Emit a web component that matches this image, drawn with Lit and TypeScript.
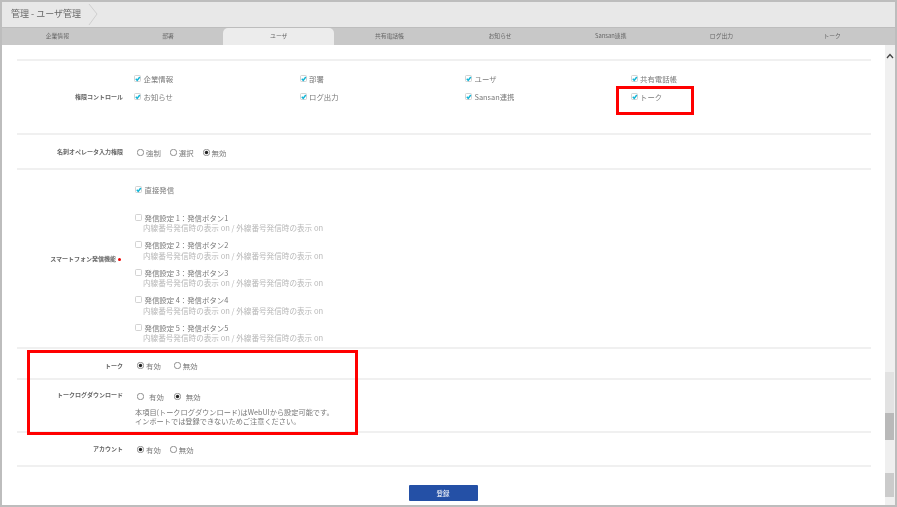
import { LitElement, html, css, svg } from "lit";
import { customElement } from "lit/decorators.js";

const tabs = ["企業情報", "部署", "ユーザ", "共有電話帳", "お知らせ", "Sansan連携", "ログ出力", "トーク"];
const perms = ["企業情報", "部署", "ユーザ", "共有電話帳", "お知らせ", "ログ出力", "Sansan連携", "トーク"];

const tick = svg`<path d="M1.8 3.8 3.2 5.4 5.8 2" fill="none" stroke="#12b5d6" stroke-width="1.5"/>`;

@customElement("app-root")
export class AppRoot extends LitElement {
  static styles = css`
    :host { display: block; width: 897px; height: 507px; }
    * { box-sizing: border-box; }
    .frame {
      position: relative; width: 897px; height: 507px; overflow: hidden; background: #fff;
      border: 2px solid #bdbdbd;
      font-family: "Noto Sans CJK JP", "Noto Sans", sans-serif; color: #7a7a7a; font-size: 7.4px;
    }
    .soft { filter: blur(0.35px); }
    .head { height: 25px; background: #e8e8e8; display: flex; align-items: center; padding: 0 0 2px 9px; }
    .title { font-size: 9px; color: #666; }
    .chev { margin-left: 7px; }
    .tabs { height: 18px; display: flex; background: #c8c8c8; border-top: 1px solid #bdbdbd; }
    .tab { flex: 0 0 110.7px; display: flex; align-items: center; justify-content: center; font-size: 5.8px; color: #666; padding-bottom: 3px; }
    .tab.on { background: #ececec; border-radius: 5px 5px 0 0; }
    .body { display: flex; height: 460px; }
    .main { width: 883px; padding: 14px 14px 0 15px; }
    .row { display: flex; border-top: 2px solid #f0f0f0; }
    .lab { width: 106px; text-align: right; font-size: 6px; font-weight: 700; color: #666; flex: none; }
    .val { padding-left: 11px; flex: 1; }
    .r-perm { height: 74px; align-items: flex-start; }
    .r-perm .lab { margin-top: 31px; }
    .grid { display: grid; grid-template-columns: repeat(4, 165.5px); row-gap: 6px; padding-top: 11px; }
    .opt { display: flex; align-items: center; gap: 2.5px; height: 12px; white-space: nowrap; }
    .box { width: 7px; height: 7px; flex: none; }
    .r-op { height: 35px; }
    .r-op .lab { margin-top: 12px; }
    .radios { display: flex; gap: 9px; }
    .radios .opt { gap: 2px; }
    .r-op .val { padding-top: 11px; padding-left: 14px; }
    .r-phone { height: 179px; }
    .r-phone .lab { align-self: center; padding-right: 2px; }
    .dot { display: inline-block; width: 3px; height: 3px; border-radius: 50%; background: #e00; margin-left: 2px; vertical-align: middle; }
    .phone { padding: 13px 0 0 12px; flex: 1; }
    .direct { margin-bottom: 16px; }
    .item { height: 27.5px; }
    .sub { color: #b8b8b8; padding-left: 8px; line-height: 10px; font-size: 7.6px; }
    .r-talk { height: 31px; }
    .r-talk .lab { margin-top: 12px; }
    .r-talk .val { padding: 10px 0 0 14px; }
    .r-talk .radios { gap: 13px; }
    .r-dl { height: 53px; }
    .r-dl .lab { margin-top: 10px; }
    .r-dl .val { padding-top: 10px; padding-left: 14px; }
    .r-dl .radios { gap: 10px; }
    .r-dl .opt { gap: 5px; }
    .note { margin: 6px 0 0 -2px; line-height: 9px; font-size: 7.2px; color: #777; }
    .r-acc { height: 34px; }
    .r-acc .lab { margin-top: 11px; }
    .r-acc .val { padding: 10px 0 0 14px; }
    .end { border-top: 2px solid #f0f0f0; display: flex; justify-content: center; padding: 18px 2px 0 0; }
    .btn { width: 69px; height: 16px; background: #2450a6; color: #fff; border-radius: 1px; font-size: 6.5px; display: flex; align-items: center; justify-content: center; }
    .scroll { width: 10px; background: #f0f0f0; display: flex; flex-direction: column; align-items: flex-start; }
    .up { margin: 8px 0 313px 1px; flex: none; }
    .s1, .s2, .s3, .s4 { width: 9px; flex: none; }
    .s1 { height: 41px; background: #e2e2e2; }
    .s2 { height: 27px; background: #b9b9b9; }
    .s3 { height: 33px; background: #efefef; }
    .s4 { height: 24px; background: #cbcbcb; }
    .mark { position: absolute; border: 3px solid #f00; pointer-events: none; }
    .m1 { left: 614px; top: 84px; width: 78px; height: 29px; }
    .m2 { left: 25px; top: 348px; width: 331px; height: 85px; }
  `;

  private check(on: boolean) {
    return html`<svg class="box" viewBox="0 0 7 7">
      <rect x=".5" y=".5" width="6" height="6" rx="1" fill="#fff" stroke="#c8c8c8" stroke-width=".8"/>
      ${on ? tick : ""}
    </svg>`;
  }

  private radio(on: boolean) {
    return html`<svg class="box" viewBox="0 0 7 7">
      <circle cx="3.5" cy="3.5" r="3.2" fill="#fff" stroke="#666" stroke-width=".7"/>
      ${on ? svg`<circle cx="3.5" cy="3.5" r="1.7" fill="#222"/>` : ""}
    </svg>`;
  }

  private radios(items: [string, boolean][]) {
    return html`<div class="radios">${items.map(([t, on]) => html`<span class="opt">${this.radio(on)}${t}</span>`)}</div>`;
  }

  render() {
    return html`<div class="frame">
      <div class="head soft">
        <span class="title">管理 - ユーザ管理</span>
        <svg class="chev" width="10" height="24" viewBox="0 0 10 24"><path d="M1 2 9 12 1 23" fill="none" stroke="#cfcfcf"/></svg>
      </div>
      <div class="tabs soft">${tabs.map((t, i) => html`<div class="tab ${i === 2 ? "on" : ""}">${t}</div>`)}</div>
      <div class="body">
        <div class="main soft">
          <div class="row r-perm">
            <div class="lab">権限コントロール</div>
            <div class="val grid">${perms.map((p) => html`<span class="opt">${this.check(true)}${p}</span>`)}</div>
          </div>
          <div class="row r-op">
            <div class="lab">名刺オペレータ入力権限</div>
            <div class="val">${this.radios([["強制", false], ["選択", false], ["無効", true]])}</div>
          </div>
          <div class="row r-phone">
            <div class="lab">スマートフォン発信機能<span class="dot"></span></div>
            <div class="phone">
              <div class="opt direct">${this.check(true)}直接発信</div>
              ${[1, 2, 3, 4, 5].map((n) => html`<div class="item">
                <div class="opt">${this.check(false)}発信設定 ${n}：発信ボタン${n}</div>
                <div class="sub">内線番号発信時の表示 on / 外線番号発信時の表示 on</div>
              </div>`)}
            </div>
          </div>
          <div class="row r-talk">
            <div class="lab">トーク</div>
            <div class="val">${this.radios([["有効", true], ["無効", false]])}</div>
          </div>
          <div class="row r-dl">
            <div class="lab">トークログダウンロード</div>
            <div class="val">
              ${this.radios([["有効", false], ["無効", true]])}
              <div class="note">本項目(トークログダウンロード)はWebUIから設定可能です。<br />インポートでは登録できないためご注意ください。</div>
            </div>
          </div>
          <div class="row r-acc">
            <div class="lab">アカウント</div>
            <div class="val">${this.radios([["有効", true], ["無効", false]])}</div>
          </div>
          <div class="end"><div class="btn">登録</div></div>
        </div>
        <div class="scroll">
          <svg class="up" width="8" height="6" viewBox="0 0 8 6"><path d="M1 5 4 1.5 7 5" fill="none" stroke="#444" stroke-width="1.3"/></svg>
          <div class="s1"></div><div class="s2"></div><div class="s3"></div><div class="s4"></div>
        </div>
      </div>
      <div class="mark m1"></div>
      <div class="mark m2"></div>
    </div>`;
  }
}
